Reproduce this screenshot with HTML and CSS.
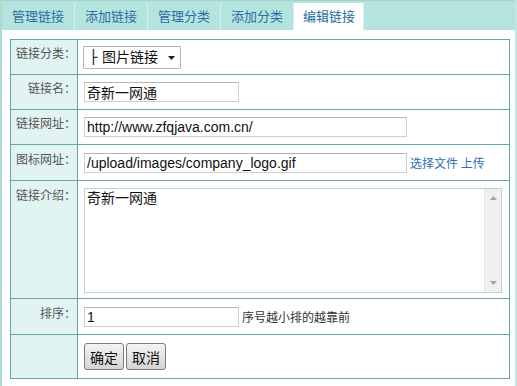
FILE: index.html
```html
<!DOCTYPE html>
<html lang="zh-CN">
<head>
<meta charset="utf-8">
<title>编辑链接</title>
<link rel="stylesheet" href="styles.css">
</head>
<body>
<div class="wrap">
  <ul class="tabs">
    <li class="tab">管理链接</li>
    <li class="tab">添加链接</li>
    <li class="tab">管理分类</li>
    <li class="tab">添加分类</li>
    <li class="tab active">编辑链接</li>
  </ul>
  <div class="panel">
    <table class="form">
      <tr class="r35">
        <td class="label">链接分类：</td>
        <td class="value">
          <span class="selectbox">
            <select class="select"><option>├ 图片链接</option></select>
            <svg class="arrow" width="7" height="4" viewBox="0 0 7 4"><path d="M0 0H7L3.5 4Z" fill="#222"/></svg>
          </span>
        </td>
      </tr>
      <tr class="r35">
        <td class="label">链接名：</td>
        <td class="value"><input class="field short" type="text" value="奇新一网通"></td>
      </tr>
      <tr class="r35">
        <td class="label">链接网址：</td>
        <td class="value"><input class="field long" type="text" value="http://www.zfqjava.com.cn/"></td>
      </tr>
      <tr class="r36">
        <td class="label">图标网址：</td>
        <td class="value"><input class="field long" type="text" value="/upload/images/company_logo.gif"><a class="link" href="#">选择文件 上传</a></td>
      </tr>
      <tr class="rintro">
        <td class="label top">链接介绍：</td>
        <td class="value areacell">
          <div class="areawrap">
            <textarea class="area">奇新一网通</textarea>
            <div class="scroll">
              <svg class="sarrow up" width="7" height="4" viewBox="0 0 7 4"><path d="M0 4H7L3.5 0Z" fill="#a3a3a3"/></svg>
              <svg class="sarrow down" width="7" height="4" viewBox="0 0 7 4"><path d="M0 0H7L3.5 4Z" fill="#a3a3a3"/></svg>
            </div>
          </div>
        </td>
      </tr>
      <tr class="r36">
        <td class="label">排序：</td>
        <td class="value"><input class="field short" type="text" value="1"><span class="hint">序号越小排的越靠前</span></td>
      </tr>
      <tr class="rbtn">
        <td class="label"></td>
        <td class="value btncell"><button class="btn" type="button">确定</button><button class="btn" type="button">取消</button></td>
      </tr>
    </table>
  </div>
</div>
</body>
</html>
```
FILE: styles.css
```css
html, body {
  margin: 0;
  padding: 0;
  background: #fff;
  font-family: "Noto Sans CJK SC", "Liberation Sans", sans-serif;
}
.wrap {
  width: 513px;
  height: 386px;
  border-left: 2px solid #a8dcd5;
  border-right: 2px solid #bfe8e2;
  background: #fff;
  overflow: hidden;
}
.tabs {
  display: flex;
  margin: 0;
  padding: 0;
  list-style: none;
  height: 30px;
  box-sizing: border-box;
  background: #b5e4de;
  border-top: 1px solid #9ed6cf;
}
.tab {
  margin-top: 2px;
  height: 27px;
  line-height: 26px;
  padding: 0 10px;
  font-size: 13px;
  color: #2a6fa6;
  border-right: 1px solid #d7f1ed;
}
.tab.active {
  background: #fff;
  padding: 0 8px 0 9px;
  color: #2a6a9c;
}
.panel {
  padding: 9px 0 0 8px;
}
.form {
  width: 500px;
  border-collapse: collapse;
}
.form td {
  border: 1px solid #62a8a3;
  padding: 0;
}
.label {
  width: 65px;
  padding-right: 1px !important;
  padding-bottom: 8px !important;
  background: #e2f4f1;
  text-align: right;
  font-size: 12px;
  line-height: 16px;
  color: #555;
  vertical-align: middle;
}
.label.top {
  vertical-align: top;
  padding-top: 6px !important;
  padding-bottom: 0 !important;
}
.value {
  padding-left: 6px !important;
  font-size: 12px;
  line-height: 16px;
  vertical-align: middle;
}
.r35 td { height: 34px; }
.r35 td.label { height: 26px; }
.r36 td { height: 35px; }
.r36 td.label { height: 27px; }
.rintro td.label { height: 111px; }
.rintro td.areacell { height: 110px; }
.rbtn td { height: 43px; }
.rbtn td.label { height: 35px; }

.selectbox {
  position: relative;
  display: inline-block;
  margin-left: -1px;
  vertical-align: middle;
}
.select {
  appearance: none;
  -webkit-appearance: none;
  width: 98px;
  height: 23px;
  box-sizing: border-box;
  border: 1px solid #b3b3b3;
  border-radius: 1px;
  background: #fff;
  padding: 0 0 0 5px;
  font: 14px "DejaVu Sans", "Noto Sans CJK SC", sans-serif;
  color: #111;
  outline: none;
}
.arrow {
  position: absolute;
  right: 6px;
  top: 10px;
}
.field {
  height: 20px;
  box-sizing: border-box;
  border: 1px solid #cfcfcf;
  border-top-color: #b5b5b5;
  padding: 0 2px;
  margin: 0;
  font: 14px "Liberation Sans", "Noto Sans CJK SC", sans-serif;
  color: #111;
  vertical-align: middle;
  outline: none;
}
.short { width: 155px; }
.long { width: 323px; }
.link {
  margin-left: 3px;
  color: #2a6fb5;
  text-decoration: none;
  vertical-align: middle;
}
.hint {
  margin-left: 3px;
  color: #333;
  vertical-align: middle;
}
.areacell {
  vertical-align: top !important;
  padding-top: 7px !important;
}
.areawrap {
  position: relative;
  width: 418px;
  height: 105px;
}
.area {
  display: block;
  width: 418px;
  height: 105px;
  box-sizing: border-box;
  margin: 0;
  padding: 0 18px 0 2px;
  border: 1px solid #b9d3cf;
  resize: none;
  overflow: hidden;
  font: 14px "Noto Sans CJK SC", sans-serif;
  line-height: 16px;
  color: #111;
  outline: none;
}
.scroll {
  position: absolute;
  top: 1px;
  right: 1px;
  bottom: 1px;
  width: 16px;
  background: #f0f0f0;
  border-left: 1px solid #e6e6e6;
}
.sarrow {
  position: absolute;
  left: 5px;
}
.sarrow.up { top: 7px; }
.sarrow.down { bottom: 7px; }
.btncell {
  vertical-align: middle;
}
.btn {
  width: 40px;
  height: 27px;
  margin: 0 2px 0 0;
  padding: 0;
  border: 1px solid #7b7b7b;
  border-radius: 3px;
  background: linear-gradient(#f4f4f4, #d4d4d4);
  font: 14px "Noto Sans CJK SC", sans-serif;
  color: #111;
  vertical-align: middle;
}
```
